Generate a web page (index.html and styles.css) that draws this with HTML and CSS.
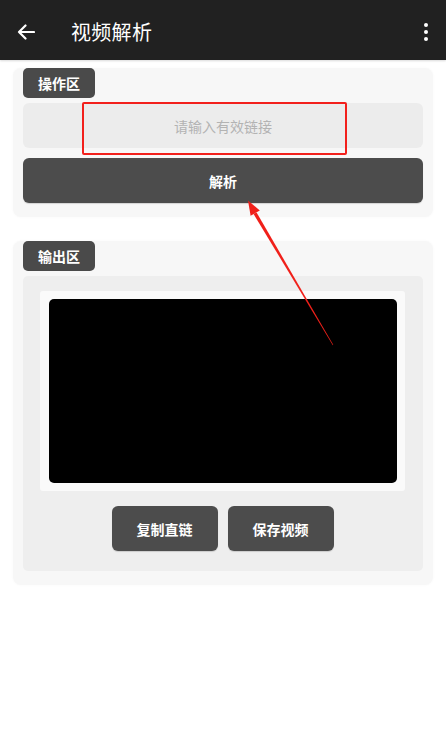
FILE: index.html
```html
<!DOCTYPE html>
<html lang="zh-CN">
<head>
<meta charset="utf-8">
<title>视频解析</title>
<link rel="stylesheet" href="styles.css">
</head>
<body>
<header class="appbar">
  <svg class="back" width="18" height="16" viewBox="0 0 18 16"><path d="M17 8H2M8.5 1.5L2 8l6.5 6.5" fill="none" stroke="#fff" stroke-width="2.2" stroke-linecap="round" stroke-linejoin="round"/></svg>
  <h1 class="title">视频解析</h1>
  <div class="more"><span></span><span></span><span></span></div>
</header>
<main class="content">
  <section class="card card-op">
    <div class="tag">操作区</div>
    <div class="input">请输入有效链接</div>
    <button class="btn-wide">解析</button>
  </section>
  <section class="card card-out">
    <div class="tag">输出区</div>
    <div class="panel">
      <div class="frame"><div class="video"></div></div>
      <div class="actions">
        <button class="btn">复制直链</button>
        <button class="btn">保存视频</button>
      </div>
    </div>
  </section>
</main>
<div class="highlight"></div>
<svg class="arrow" width="446" height="742" viewBox="0 0 446 742">
  <polygon points="256.6,212.4 253.6,214.0 332.8,345.2 333.2,344.8" fill="#f0201a"/>
  <polygon points="248,200.5 259.8,210.4 250.6,215.8" fill="#f0201a"/>
</svg>
</body>
</html>
```
FILE: styles.css
```css
* { box-sizing: border-box; }
html, body { margin: 0; padding: 0; }
body {
  width: 446px;
  height: 742px;
  background: #ffffff;
  font-family: "Noto Sans CJK SC", "Noto Sans", sans-serif;
  position: relative;
  overflow: hidden;
}
.appbar {
  height: 60px;
  background: #212121;
  display: flex;
  align-items: center;
  padding: 4px 0 0 17px;
  box-shadow: 0 1px 2px rgba(0,0,0,0.15);
}
.back { display: block; flex: none; }
.title {
  margin: 0 0 0 36px;
  font-size: 20px;
  font-weight: 400;
  color: #ffffff;
  letter-spacing: 0.3px;
  flex: 1;
  line-height: 1;
}
.more {
  width: 4px;
  margin-right: 18px;
  display: flex;
  flex-direction: column;
  gap: 2.6px;
}
.more span {
  width: 4px;
  height: 4px;
  border-radius: 50%;
  background: #ffffff;
}
.content {
  padding: 0 13px;
}
.card {
  background: #f7f7f7;
  border-radius: 8px;
  padding: 0 10px 14px;
  box-shadow: 0 0 3px rgba(0,0,0,0.03);
}
.card-op { margin-top: 14px; }
.card-out { margin-top: 31px; }
.tag {
  width: 72px;
  height: 30px;
  margin-top: -6px;
  background: #4a4a4a;
  border-radius: 5px;
  color: #ffffff;
  font-size: 14px;
  font-weight: 700;
  display: flex;
  align-items: center;
  justify-content: center;
}
.card-out .tag { margin-top: -7px; }
.input {
  margin-top: 5px;
  height: 45px;
  background: #ececec;
  border-radius: 6px;
  color: #b3b3b3;
  font-size: 14px;
  display: flex;
  align-items: center;
  justify-content: center;
}
.btn-wide {
  display: block;
  width: 100%;
  margin-top: 10px;
  height: 45px;
  border: none;
  background: #4c4c4c;
  border-radius: 6px;
  color: #ffffff;
  font-family: inherit;
  font-size: 14px;
  font-weight: 700;
  box-shadow: 0 1px 1px rgba(0,0,0,0.15);
}
.panel {
  margin-top: 5px;
  background: #eeeeee;
  border-radius: 5px;
  padding: 15px 18px 20px 17px;
}
.frame {
  background: #fafafa;
  padding: 8px 8px 8px 9px;
  border-radius: 3px;
}
.video {
  height: 184px;
  background: #000000;
  border-radius: 5px;
}
.actions {
  margin-top: 15px;
  display: flex;
  justify-content: center;
  gap: 10px;
}
.btn {
  width: 106px;
  height: 45px;
  border: none;
  background: #4c4c4c;
  border-radius: 6px;
  color: #ffffff;
  font-family: inherit;
  font-size: 14px;
  font-weight: 700;
  box-shadow: 0 1px 1px rgba(0,0,0,0.15);
}
.highlight {
  position: absolute;
  left: 82px;
  top: 102px;
  width: 265px;
  height: 53px;
  border: 2px solid #f2201c;
  border-radius: 2px;
}
.arrow {
  position: absolute;
  left: 0;
  top: 0;
  pointer-events: none;
}
```
